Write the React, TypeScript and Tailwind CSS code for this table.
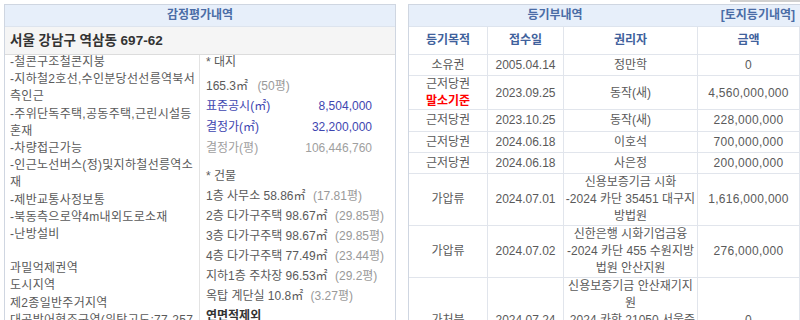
import React from 'react';

const leftLines = [
  '-철콘구조철콘지붕',
  '-지하철2호선,수인분당선선릉역북서',
  '측인근',
  '-주위단독주택,공동주택,근린시설등',
  '혼재',
  '-차량접근가능',
  '-인근노선버스(정)및지하철선릉역소',
  '재',
  '-제반교통사정보통',
  '-북동측으로약4m내외도로소재',
  '-난방설비',
  '',
  '과밀억제권역',
  '도시지역',
  '제2종일반주거지역',
  '대공방어협조구역(위탁고도:77-257',
  'm)',
];

const buildings = [
  { name: '1층 사무소 58.86㎡', py: '(17.81평)' },
  { name: '2층 다가구주택 98.67㎡', py: '(29.85평)' },
  { name: '3층 다가구주택 98.67㎡', py: '(29.85평)' },
  { name: '4층 다가구주택 77.49㎡', py: '(23.44평)' },
  { name: '지하1층 주차장 96.53㎡', py: '(29.2평)' },
  { name: '옥탑 계단실 10.8㎡', py: '(3.27평)' },
];

interface Row {
  type: string;
  cancel?: boolean;
  date: string;
  holder: string[];
  amount: string;
  h: string;
}

const rows: Row[] = [
  { type: '소유권', date: '2005.04.14', holder: ['정만학'], amount: '0', h: 'h-[21px]' },
  { type: '근저당권', cancel: true, date: '2023.09.25', holder: ['동작(새)'], amount: '4,560,000,000', h: 'h-[34px]' },
  { type: '근저당권', date: '2023.10.25', holder: ['동작(새)'], amount: '228,000,000', h: 'h-[22px]' },
  { type: '근저당권', date: '2024.06.18', holder: ['이호석'], amount: '700,000,000', h: 'h-[21px]' },
  { type: '근저당권', date: '2024.06.18', holder: ['사은정'], amount: '200,000,000', h: 'h-[21px]' },
  {
    type: '가압류',
    date: '2024.07.01',
    holder: ['신용보증기금 시화', '-2024 카단 35451 대구지', '방법원'],
    amount: '1,616,000,000',
    h: 'h-[52px]',
  },
  {
    type: '가압류',
    date: '2024.07.02',
    holder: ['신한은행 시화기업금융', '-2024 카단 455 수원지방', '법원 안산지원'],
    amount: '276,000,000',
    h: 'h-[52px]',
  },
  {
    type: '가처분',
    date: '2024.07.24',
    holder: ['신용보증기금 안산재기지', '원', '-2024 카합 21050 서울중', '앙지방법원', '(처분금지)'],
    amount: '0',
    h: 'h-[86px]',
  },
];

const cell = 'flex flex-col items-center justify-center border-r border-[#e1e5ec] text-center leading-[17px]';

function LeftPanel() {
  return (
    <div className="w-[392px] shrink-0 border border-[#cfd6e1] bg-white">
      <div className="h-[22px] border-b border-[#dde4ee] bg-[#e7effa] text-center font-bold leading-[21px] text-[#4a6ca6]">
        감정평가내역
      </div>
      <div className="h-[28px] border-b border-[#dcdcdc] bg-[#f5f5f5] pl-[5px] text-[13.5px] font-bold leading-[27px] text-[#333]">
        서울 강남구 역삼동 697-62
      </div>
      <div className="grid grid-cols-[195px_1fr]">
        <div className="border-r border-[#e3e3e3] pl-[5px] tracking-[0.3px] text-[#5a5a5a]">
          <div className="-mt-px">
            {leftLines.map((l, i) => (
              <div key={i} className="h-[17.2px] whitespace-nowrap leading-[17.2px]">
                {l}
              </div>
            ))}
          </div>
        </div>
        <div className="pl-[6px] text-[#5a5a5a]">
          <div className="leading-[14px]">* 대지</div>
          <div className="mt-[7px] leading-[20px]">
            165.3㎡ <span className="ml-[6px] text-[#999]">(50평)</span>
          </div>
          <div className="flex w-[166px] justify-between leading-[21px] text-[#3e46b0]">
            <span>표준공시(㎡)</span>
            <span>8,504,000</span>
          </div>
          <div className="flex w-[166px] justify-between leading-[21px] text-[#3e46b0]">
            <span>결정가(㎡)</span>
            <span>32,200,000</span>
          </div>
          <div className="flex w-[166px] justify-between leading-[21px] text-[#a0a0a0]">
            <span>결정가(평)</span>
            <span>106,446,760</span>
          </div>
          <div className="mt-[7px] leading-[20px]">* 건물</div>
          {buildings.map((b) => (
            <div key={b.name} className="whitespace-nowrap leading-[20px]">
              {b.name} <span className="ml-[4px] text-[#999]">{b.py}</span>
            </div>
          ))}
          <div className="font-bold leading-[20px] text-[#333]">연면적제외</div>
        </div>
      </div>
    </div>
  );
}

function RightPanel() {
  return (
    <div className="w-[393px] shrink-0 border border-[#cfd6e1] bg-white">
      <div className="flex h-[22px] border-b border-[#dde4ee] bg-[#e7effa] font-bold leading-[21px] text-[#4a6ca6]">
        <div className="w-[292px] text-center">등기부내역</div>
        <div className="flex-1 pr-[5px] text-right">[토지등기내역]</div>
      </div>
      <div className="grid h-[28px] grid-cols-[79px_76px_134px_1fr] border-b border-[#e1e5ec] font-bold text-[#40619c]">
        <div className={cell}>등기목적</div>
        <div className={cell}>접수일</div>
        <div className={cell}>권리자</div>
        <div className={cell}>금액</div>
      </div>
      {rows.map((r, i) => (
        <div key={i} className={`grid grid-cols-[79px_76px_134px_1fr] border-b border-[#e1e5ec] text-[#5a5a5a] ${r.h}`}>
          <div className={cell}>
            <div>{r.type}</div>
            {r.cancel && <div className="font-bold text-[#f00]">말소기준</div>}
          </div>
          <div className={cell}>{r.date}</div>
          <div className={cell}>
            {r.holder.map((h, j) => (
              <div key={j} className="whitespace-nowrap">
                {h}
              </div>
            ))}
          </div>
          <div className={`${cell} tracking-[0.3px]`}>{r.amount}</div>
        </div>
      ))}
    </div>
  );
}

export default function App() {
  return (
    <div className="h-[320px] w-[800px] overflow-hidden bg-white font-['Liberation_Sans','Noto_Sans_CJK_KR',sans-serif] text-[12px]">
      <div className="flex h-[2px] justify-end">
        <div className="w-[70px] bg-[#d0d0d0]" />
      </div>
      <div className="flex items-start gap-[12px] pl-[4px] pt-[2px]">
        <LeftPanel />
        <RightPanel />
      </div>
    </div>
  );
}
